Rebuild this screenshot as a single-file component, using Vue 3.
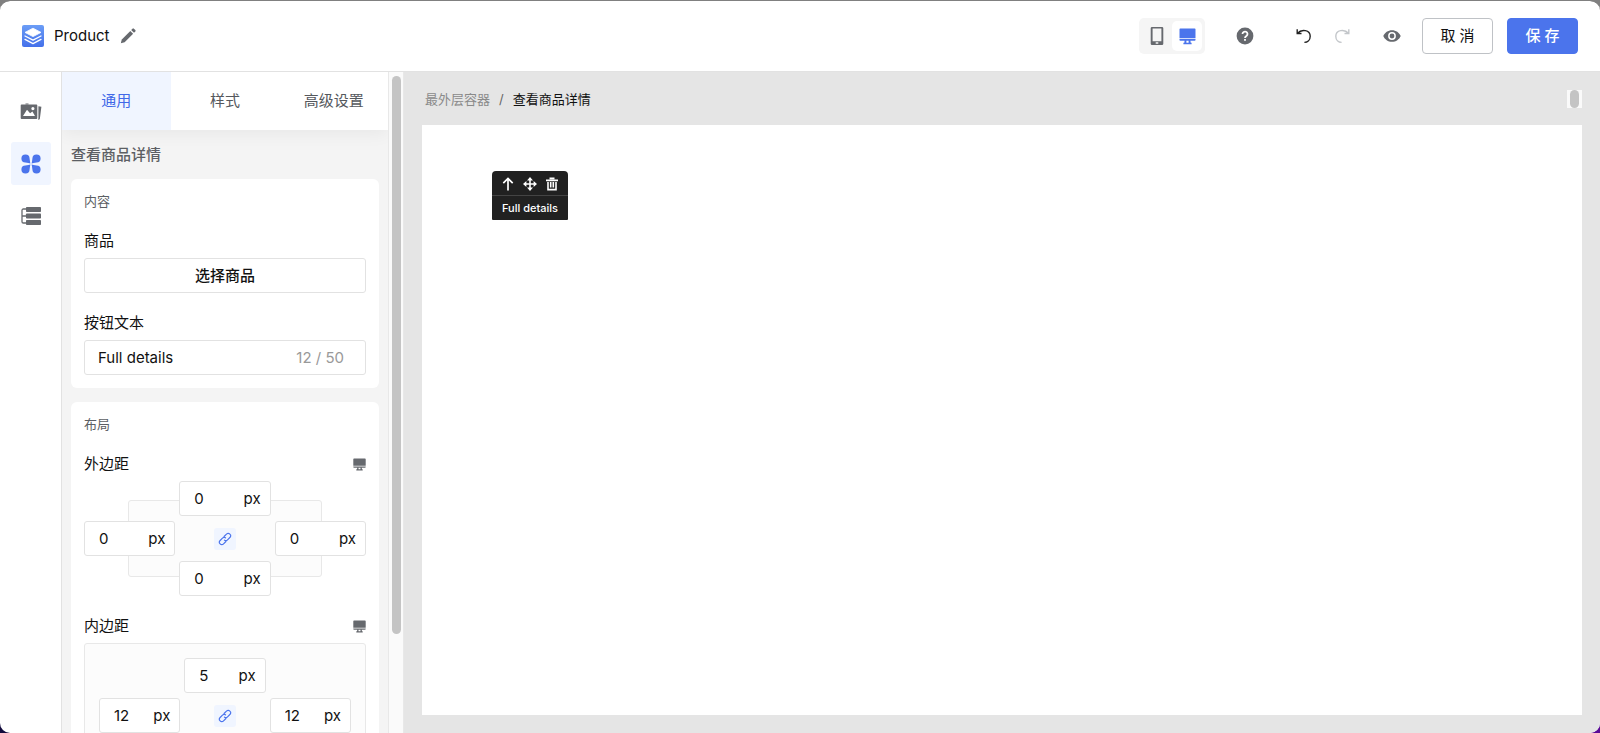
<template>
  <div class="editor">
    <header class="topbar">
      <div class="brand">
        <svg class="brand__logo" viewBox="0 0 22 22">
          <defs>
            <linearGradient id="logoFill" x1="0" y1="0" x2="0" y2="1">
              <stop offset="0" stop-color="#6b9df6" />
              <stop offset="1" stop-color="#4470ea" />
            </linearGradient>
          </defs>
          <rect width="22" height="22" rx="2" fill="url(#logoFill)" />
          <path d="M11 3.200 19 7.400 11 11.600 3 7.400z" fill="#fff" stroke="#fff" stroke-width=".8" stroke-linejoin="round" />
          <path d="M3 11l8 4.200 8-4.200M3 14.400l8 4.200 8-4.200" fill="none" stroke="#fff" stroke-width="1.300" stroke-linecap="round" stroke-linejoin="round" />
        </svg>
        <span class="brand__name">Product</span>
        <button class="icon-btn" type="button" aria-label="重命名">
          <svg width="16" height="16" viewBox="0 0 16 16" fill="#66696e">
            <path d="M.8 15.200l1-3.800L10.300 2.900l2.800 2.800-8.500 8.500z" />
            <path d="M11.200 2l1.300-1.300a1 1 0 0 1 1.400 0l1.400 1.400a1 1 0 0 1 0 1.400L14 4.800z" />
          </svg>
        </button>
      </div>

      <div class="tools">
        <div class="devices">
          <button class="device" type="button" aria-label="手机">
            <svg width="14" height="18" viewBox="0 0 14 18">
              <path fill="#66696e" fill-rule="evenodd" d="M2 0h10a1.300 1.300 0 0 1 1.300 1.300v15.400A1.300 1.300 0 0 1 12 18H2a1.300 1.300 0 0 1-1.300-1.300V1.300A1.300 1.300 0 0 1 2 0zm.6 1.500v12.700h8.800V1.500zM5.700 15.300v1.400h2.600v-1.400z" />
            </svg>
          </button>
          <button class="device device--active" type="button" aria-label="桌面">
            <svg width="17" height="17" viewBox="0 0 17 17" fill="#4b74ec">
              <path d="M1.300.5h14.400a.8.800 0 0 1 .8.800v8.900H.5V1.300a.8.800 0 0 1 .8-.8z" />
              <path d="M.5 11h16v1a.8.800 0 0 1-.8.800H1.300a.8.800 0 0 1-.8-.8zM5.600 12.800h1.800v2h2.200v-2h1.800l.3 2h.9v1.500H4.400v-1.500h.9z" />
            </svg>
          </button>
        </div>
        <button class="icon-btn icon-btn--help" type="button" aria-label="帮助">
          <svg width="18" height="18" viewBox="0 0 18 18">
            <circle cx="9" cy="9" r="8.400" fill="#66696e" />
            <path d="M6.500 7a2.500 2.400 0 1 1 4.100 1.800C9.600 9.500 9 9.800 9 11" fill="none" stroke="#fff" stroke-width="1.800" />
            <rect x="8.100" y="12" width="1.800" height="1.800" fill="#fff" />
          </svg>
        </button>
        <div class="history">
          <button class="icon-btn" type="button" aria-label="撤销">
            <svg width="18" height="18" viewBox="0 0 18 18" fill="none" stroke="#222" stroke-width="1.400">
              <path d="M2.200 2.200v4.300h4.300M2.500 6.200C6.500 1.800 15.200 2.700 15.200 9.300c0 3.700-2.600 6.100-5.800 6.100" />
            </svg>
          </button>
          <button class="icon-btn" type="button" aria-label="重做" disabled>
            <svg width="18" height="18" viewBox="0 0 18 18" fill="none" stroke="#c3c6ca" stroke-width="1.400">
              <path d="M15.800 2.200v4.300h-4.300M15.500 6.200C11.500 1.800 2.800 2.700 2.800 9.300c0 3.700 2.600 6.100 5.800 6.100" />
            </svg>
          </button>
        </div>
        <button class="icon-btn icon-btn--eye" type="button" aria-label="预览">
          <svg width="18" height="18" viewBox="0 0 18 18">
            <path fill="#66696e" fill-rule="evenodd" d="M9 3.200c4 0 7.200 2.300 8.700 5.800-1.500 3.500-4.700 5.800-8.700 5.800S1.800 12.500.3 9C1.800 5.500 5 3.200 9 3.200zM9 5.100a3.900 3.900 0 1 0 0 7.800 3.900 3.900 0 0 0 0-7.800zM9 6.600a2.400 2.400 0 1 1 0 4.800 2.400 2.400 0 0 1 0-4.800z" />
          </svg>
        </button>
        <div class="actions">
          <button class="btn" type="button">取 消</button>
          <button class="btn btn--primary" type="button">保 存</button>
        </div>
      </div>
    </header>

    <div class="workspace">
      <nav class="rail">
        <button class="rail__item" type="button" aria-label="素材">
          <svg width="22" height="18" viewBox="0 0 22 18">
            <path fill="#66696e" fill-rule="evenodd" d="M1.600 1.500h14.800a.9.900 0 0 1 .9.900v12.700a.9.900 0 0 1-.9.900H1.600a.9.900 0 0 1-.9-.9V2.400a.9.900 0 0 1 .9-.9zM3 13h12l-2.600-4.500-2.300 1.800L7 6.700zM12.900 4a1.600 1.600 0 1 0 0 3.200 1.600 1.600 0 0 0 0-3.200z" />
            <path fill="#66696e" d="M5.500.6h3v.9h-3zM18.400 3.300l3 .5-1.600 12.400-1.800.5.400-1.500z" />
          </svg>
        </button>
        <button class="rail__item rail__item--active" type="button" aria-label="组件">
          <svg width="20" height="20" viewBox="0 0 20 20" fill="#4b74ec">
            <path d="M9.400 9.400Q8 9 4.400 8.600A4.100 4.100 0 1 1 8.600 4.400Q9 8 9.400 9.400z" />
            <path d="M10.600 9.400Q12 9 15.600 8.600A4.100 4.100 0 1 0 11.400 4.400Q11 8 10.600 9.400z" />
            <path d="M9.400 10.600Q8 11 4.400 11.400A4.100 4.100 0 1 0 8.600 15.600Q9 12 9.400 10.600z" />
            <path d="M10.600 10.600Q12 11 15.600 11.400A4.100 4.100 0 1 1 11.400 15.600Q11 12 10.600 10.600z" />
          </svg>
        </button>
        <button class="rail__item" type="button" aria-label="图层">
          <svg width="20" height="18" viewBox="0 0 20 18">
            <path d="M6 2H2.300A1.300 1.300 0 0 0 1 3.300v11.400A1.300 1.300 0 0 0 2.300 16H6M1 9h5" fill="none" stroke="#66696e" stroke-width="1.300" />
            <g fill="#66696e">
              <rect x="5" y="0" width="15" height="5" rx=".8" />
              <rect x="5" y="6.500" width="15" height="5" rx=".8" />
              <rect x="5" y="13" width="15" height="5" rx=".8" />
            </g>
          </svg>
        </button>
      </nav>

      <aside class="panel">
        <div class="tabs">
          <button
            v-for="tab in tabs"
            :key="tab"
            type="button"
            class="tab"
            :class="{ 'tab--active': tab === activeTab }"
            @click="activeTab = tab"
          >{{ tab }}</button>
        </div>

        <div class="panel__body">
          <h2 class="panel__title">查看商品详情</h2>

          <section class="card">
            <h3 class="card__title">内容</h3>
            <div class="field">
              <div class="field__label">商品</div>
              <button class="picker" type="button">选择商品</button>
            </div>
            <div class="field">
              <label class="field__label" for="btnText">按钮文本</label>
              <div class="text-box">
                <input id="btnText" v-model="btnText" class="text-box__input" maxlength="50" />
                <span class="text-box__count">{{ btnText.length }} / 50</span>
              </div>
            </div>
          </section>

          <section class="card">
            <h3 class="card__title">布局</h3>
            <div v-for="group in spacing" :key="group.key" class="field">
              <div class="field__label">
                <span>{{ group.label }}</span>
                <svg width="13" height="13" viewBox="0 0 13 13" fill="#66696e">
                  <path d="M1 .5h11a.7.700 0 0 1 .7.700v6.500H.3V1.200A.7.700 0 0 1 1 .5z" />
                  <path d="M.3 8.500h12.400v.6a.7.700 0 0 1-.7.700H1a.7.700 0 0 1-.7-.7zM4.300 9.800h1.200v1.500h2V9.800h1.200l.3 1.500h.7v1.200H3.300v-1.200H4z" />
                </svg>
              </div>
              <div class="sides" :class="'sides--' + group.key">
                <label
                  v-for="(value, side) in group.values"
                  :key="side"
                  class="unit-box"
                  :class="'unit-box--' + side"
                >
                  <input v-model="group.values[side]" class="unit-box__input" :aria-label="group.label" />
                  <span>px</span>
                </label>
                <button class="link-btn" type="button" aria-label="联动">
                  <svg width="14" height="14" viewBox="0 0 14 14" fill="none" stroke="#4b74ec" stroke-width="1.200" stroke-linecap="round">
                    <path d="M6.100 4.500l2.600-2.600a2 2 0 0 1 2.900 0l.5.500a2 2 0 0 1 0 2.900L9.300 8.100a2 2 0 0 1-2.900 0" />
                    <path d="M7.900 9.500l-2.600 2.600a2 2 0 0 1-2.900 0l-.5-.5a2 2 0 0 1 0-2.900L4.700 5.900a2 2 0 0 1 2.900 0" />
                  </svg>
                </button>
              </div>
            </div>
          </section>
        </div>
      </aside>

      <div class="track"><div class="track__thumb"></div></div>

      <main class="stage">
        <div class="stage__bar">
          <nav class="crumbs">
            <a href="#" class="crumbs__link">最外层容器</a>
            <span class="crumbs__sep">/</span>
            <span>查看商品详情</span>
          </nav>
          <div class="mini-track"><div class="mini-track__thumb"></div></div>
        </div>
        <div class="canvas">
          <div class="block">
            <div class="block__tools">
              <button class="icon-btn" type="button" aria-label="选择上级">
                <svg width="14" height="14" viewBox="0 0 14 14" fill="none" stroke="#fff" stroke-width="1.700">
                  <path d="M7 13.500V1.500M2.300 6.200L7 1.500l4.700 4.700" />
                </svg>
              </button>
              <button class="icon-btn" type="button" aria-label="移动">
                <svg width="14" height="14" viewBox="0 0 14 14">
                  <path d="M7 2v10M2 7h10" stroke="#fff" stroke-width="1.600" />
                  <path d="M7 0l3 3.400H4zM7 14l3-3.400H4zM0 7l3.400-3v6zM14 7l-3.400-3v6z" fill="#fff" />
                </svg>
              </button>
              <button class="icon-btn" type="button" aria-label="删除">
                <svg width="14" height="14" viewBox="0 0 14 14" fill="none" stroke="#fff" stroke-width="1.600">
                  <path d="M1 3.400h12M4.500 1.400h5M3 5v7.600h8V5M5.700 5v5.500M8.300 5v5.500" />
                </svg>
              </button>
            </div>
            <button class="block__label" type="button">{{ btnText }}</button>
          </div>
        </div>
      </main>
    </div>
  </div>
</template>

<script setup>
import { ref, reactive } from 'vue'

const tabs = ['通用', '样式', '高级设置']
const activeTab = ref('通用')
const btnText = ref('Full details')

const spacing = reactive([
  { key: 'margin', label: '外边距', values: { top: '0', left: '0', right: '0', bottom: '0' } },
  { key: 'padding', label: '内边距', values: { top: '5', left: '12', right: '12', bottom: '5' } },
])
</script>

<style>
body {
  margin: 0;
  background: linear-gradient(to bottom, #808080 50%, transparent 50%), linear-gradient(to right, #120a3c, #5a0a96);
}
</style>

<style scoped>
.editor {
  display: flex;
  flex-direction: column;
  height: 100vh;
  box-sizing: border-box;
  border-top: 1px solid #808080;
  border-radius: 10px;
  overflow: hidden;
  background: #fff;
  background-clip: padding-box;
  color: #111;
  font-family: Inter, "Noto Sans CJK SC", sans-serif;
  font-size: 15px;
  line-height: 20px;
}

.editor *,
.editor *::before {
  box-sizing: border-box;
}

button,
input {
  font: inherit;
  color: inherit;
}

svg {
  display: block;
  flex-shrink: 0;
}

.icon-btn {
  padding: 0;
  border: 0;
  background: none;
  cursor: pointer;
}

/* 顶栏 */
.topbar {
  display: flex;
  align-items: center;
  justify-content: space-between;
  flex-shrink: 0;
  height: 71px;
  padding: 0 22px;
  border-bottom: 1px solid #e2e2e2;
}

.brand {
  display: flex;
  align-items: center;
  gap: 10px;
}

.brand__logo {
  width: 22px;
  height: 22px;
}

.tools,
.history,
.actions,
.devices {
  display: flex;
  align-items: center;
}

.devices {
  padding: 3px;
  border-radius: 5px;
  background: #f5f5f5;
}

.device {
  display: flex;
  align-items: center;
  justify-content: center;
  width: 30px;
  height: 30px;
  padding: 0;
  border: 0;
  border-radius: 5px;
  background: none;
}

.device--active {
  background: #fff;
}

.icon-btn--help {
  margin: 0 41px 0 31px;
}

.history {
  gap: 20px;
}

.icon-btn--eye {
  margin: 0 21px 0 32px;
}

.actions {
  gap: 14px;
}

.btn {
  width: 71px;
  height: 36px;
  padding: 0;
  border: 1px solid #bfc2c6;
  border-radius: 4px;
  background: #fff;
}

.btn--primary {
  border-color: #4b74ec;
  background: #4b74ec;
  color: #fff;
  font-weight: 500;
}

.workspace {
  display: flex;
  flex: 1;
  min-height: 0;
}

/* 左侧图标栏 */
.rail {
  display: flex;
  flex-direction: column;
  align-items: center;
  gap: 9px;
  flex-shrink: 0;
  width: 62px;
  padding-top: 18px;
  border-right: 1px solid #e2e2e2;
}

.rail__item {
  display: flex;
  align-items: center;
  justify-content: center;
  width: 40px;
  height: 43px;
  padding: 0;
  border: 0;
  border-radius: 3px;
  background: none;
}

.rail__item--active {
  background: #f0f5ff;
}

/* 属性面板 */
.panel {
  display: flex;
  flex-direction: column;
  flex-shrink: 0;
  width: 326px;
  overflow: hidden;
  background: #f4f4f4;
}

.tabs {
  display: flex;
  flex-shrink: 0;
  height: 58px;
  background: #fff;
  box-shadow: 0 4px 16px rgba(0, 0, 0, 0.05);
}

.tab {
  flex: 1;
  padding: 0;
  border: 0;
  background: none;
  color: #55585d;
}

.tab--active {
  background: #f0f5ff;
  color: #4169e8;
}

.panel__body {
  flex: 1;
  min-height: 0;
  padding: 0 9px;
  overflow-y: auto;
  scrollbar-width: none;
}

.panel__title {
  margin: 0;
  padding: 15px 0 14px;
  color: #5c5f64;
  font-size: 15px;
  font-weight: 500;
  line-height: 20px;
}

.card {
  margin-bottom: 14px;
  padding: 12px 13px 13px;
  border-radius: 6px;
  background: #fff;
}

.card__title {
  margin: 0 0 20px;
  color: #5c5f64;
  font-size: 13px;
  font-weight: 400;
  line-height: 20px;
}

.field + .field {
  margin-top: 20px;
}

.field__label {
  display: flex;
  align-items: center;
  justify-content: space-between;
  margin-bottom: 7px;
}

.picker,
.text-box,
.unit-box {
  display: flex;
  align-items: center;
  width: 100%;
  height: 35px;
  border: 1px solid #e2e2e2;
  border-radius: 3px;
  background: #fff;
}

.picker {
  justify-content: center;
  padding: 0;
  font-weight: 500;
}

.text-box {
  padding: 0 21px 0 13px;
}

.text-box__input,
.unit-box__input {
  flex: 1;
  width: 0;
  min-width: 0;
  padding: 0;
  border: 0;
  outline: 0;
  background: none;
}

.text-box__count {
  color: #999;
}

.unit-box {
  padding: 0 9px 0 14px;
}

.sides {
  display: grid;
  grid-template-columns: repeat(3, 1fr);
  grid-template-areas:
    ". top ."
    "left link right"
    ". bottom .";
  align-items: center;
  gap: 5px 4px;
  position: relative;
}

/* 外边距背后的参考框 */
.sides--margin::before {
  content: "";
  position: absolute;
  inset: 19px 44px;
  border: 1px solid #e8e8e8;
  border-radius: 3px;
  background: #fcfcfc;
}

.sides--padding {
  padding: 14px;
  border: 1px solid #e8e8e8;
  border-radius: 3px;
  background: #fcfcfc;
}

.unit-box,
.link-btn {
  position: relative;
}

.unit-box--top {
  grid-area: top;
}

.unit-box--left {
  grid-area: left;
}

.unit-box--right {
  grid-area: right;
}

.unit-box--bottom {
  grid-area: bottom;
}

.link-btn {
  grid-area: link;
  display: flex;
  align-items: center;
  justify-content: center;
  justify-self: center;
  width: 22px;
  height: 22px;
  padding: 0;
  border: 0;
  border-radius: 3px;
  background: #f0f5ff;
}

.track {
  flex-shrink: 0;
  width: 16px;
  padding: 4px 3px 0;
  border: 1px solid #e8e8e8;
  border-width: 0 1px;
  background: #fafafa;
}

.track__thumb {
  width: 9px;
  height: 85%;
  border-radius: 5px;
  background: #c4c4c4;
}

/* 画布 */
.stage {
  display: flex;
  flex-direction: column;
  flex: 1;
  min-width: 0;
  padding: 0 18px 18px;
  background: #e5e5e5;
}

.stage__bar {
  display: flex;
  align-items: center;
  justify-content: space-between;
  height: 53px;
  padding-left: 3px;
  font-size: 13px;
}

.crumbs {
  display: flex;
  gap: 9px;
}

.crumbs__link {
  color: #8a8a8a;
  text-decoration: none;
}

.crumbs__sep {
  color: #666;
}

.mini-track {
  padding: 0 3px;
  background: #fafafa;
}

.mini-track__thumb {
  width: 9px;
  height: 18px;
  border-radius: 5px;
  background: #c4c4c4;
}

.canvas {
  display: flex;
  align-items: flex-start;
  flex: 1;
  padding: 46px 70px;
  background: #fff;
}

.block {
  overflow: hidden;
  border-radius: 4px 4px 1px 1px;
  background: #212121;
  color: #fff;
}

.block__tools {
  display: flex;
  justify-content: space-between;
  height: 25px;
  padding: 6px 9px 5px;
  border-bottom: 1px solid #444;
}

.block__label {
  display: block;
  height: 24px;
  padding: 0 10px;
  border: 0;
  background: none;
  font-size: 11px;
  font-weight: 500;
  line-height: 24px;
}
</style>
